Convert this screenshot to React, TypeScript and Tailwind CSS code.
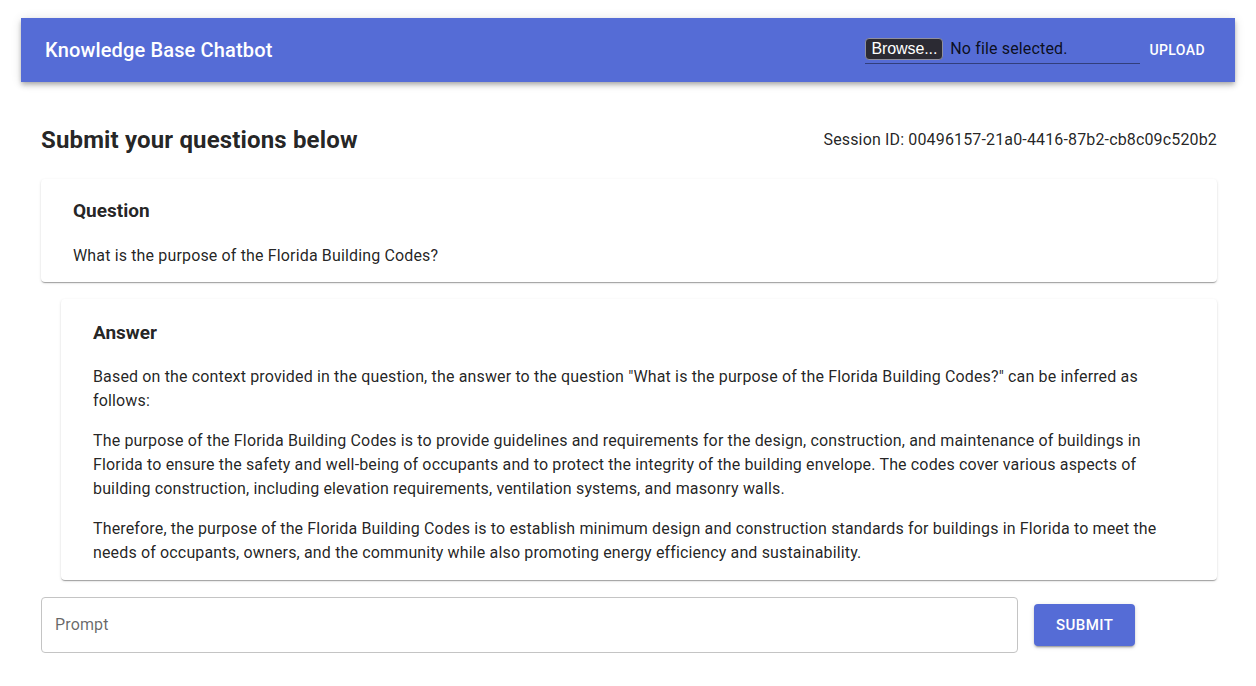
import React from "react";

const shadowCard =
  "shadow-[0px_2px_1px_-1px_rgba(0,0,0,0.2),0px_1px_1px_0px_rgba(0,0,0,0.14),0px_1px_3px_0px_rgba(0,0,0,0.12)]";

const answer = [
  'Based on the context provided in the question, the answer to the question "What is the purpose of the Florida Building Codes?" can be inferred as follows:',
  "The purpose of the Florida Building Codes is to provide guidelines and requirements for the design, construction, and maintenance of buildings in Florida to ensure the safety and well-being of occupants and to protect the integrity of the building envelope. The codes cover various aspects of building construction, including elevation requirements, ventilation systems, and masonry walls.",
  "Therefore, the purpose of the Florida Building Codes is to establish minimum design and construction standards for buildings in Florida to meet the needs of occupants, owners, and the community while also promoting energy efficiency and sustainability.",
];

const App = () => {
  return (
    <div className="min-h-screen bg-white px-[21px] pt-[18px] font-['Roboto',sans-serif] text-[rgba(0,0,0,0.87)]">
      {/* App bar */}
      <header className="flex h-16 items-center justify-between bg-[#556cd6] pl-6 pr-[22px] shadow-[0px_2px_4px_-1px_rgba(0,0,0,0.2),0px_4px_5px_0px_rgba(0,0,0,0.14),0px_1px_10px_0px_rgba(0,0,0,0.12)]">
        <h1 className="text-[20px] font-medium leading-8 tracking-[0.15px] text-white">
          Knowledge Base Chatbot
        </h1>
        <div className="flex items-center">
          <div className="flex h-[28px] w-[275px] items-center gap-[7px] border-b border-[rgba(0,0,0,0.42)] pb-[2px]">
            <span className="flex h-[22px] items-center rounded-[4px] border border-[#8f8f9d] bg-[#2b2a33] px-[5px] font-['Liberation_Sans',sans-serif] text-[16px] tracking-[-0.1px] text-white">
              Browse...
            </span>
            <span className="text-[16px] tracking-[0.15px] text-[rgba(0,0,0,0.87)]">No file selected.</span>
          </div>
          <button className="ml-[1px] px-2 py-[6px] text-[14px] font-medium uppercase leading-6 tracking-[0.4px] text-white">
            Upload
          </button>
        </div>
      </header>

      {/* Main */}
      <main className="pl-5 pr-[18px] pt-[42px] tracking-[0.15px]">
        <div className="flex items-center justify-between">
          <h2 className="text-[24px] font-bold leading-8">Submit your questions below</h2>
          <span className="text-[16px] leading-6">
            Session ID: 00496157-21a0-4416-87b2-cb8c09c520b2
          </span>
        </div>

        <section className={`mt-[23px] rounded-[4px] bg-white px-8 pt-[19px] pb-[14px] ${shadowCard}`}>
          <h3 className="text-[19px] font-bold leading-[26px] tracking-normal">Question</h3>
          <p className="mt-5 text-[16px] leading-6">What is the purpose of the Florida Building Codes?</p>
        </section>

        <section className={`ml-5 mt-[17px] rounded-[4px] bg-white px-8 pt-[21px] pb-[15px] ${shadowCard}`}>
          <h3 className="text-[19px] font-bold leading-[26px] tracking-normal">Answer</h3>
          <div className="mt-[19px] flex flex-col gap-4">
            {answer.map((p, i) => (
              <p key={i} className="text-[16px] leading-6">
                {p}
              </p>
            ))}
          </div>
        </section>

        <div className="mt-[17px] flex items-center">
          <div className="flex h-14 w-[977px] items-center rounded-[4px] border border-[#c4c4c4] px-[13px]">
            <input
              placeholder="Prompt"
              className="w-full bg-transparent text-[16px] tracking-[0.15px] outline-none placeholder:text-[rgba(0,0,0,0.6)]"
            />
          </div>
          <button className="ml-4 rounded-[4px] bg-[#556cd6] px-[22px] py-2 text-[15px] font-medium uppercase leading-[26px] tracking-[0.46px] text-white shadow-[0px_3px_1px_-2px_rgba(0,0,0,0.2),0px_2px_2px_0px_rgba(0,0,0,0.14),0px_1px_5px_0px_rgba(0,0,0,0.12)]">
            Submit
          </button>
        </div>
      </main>
    </div>
  );
};

export default App;
